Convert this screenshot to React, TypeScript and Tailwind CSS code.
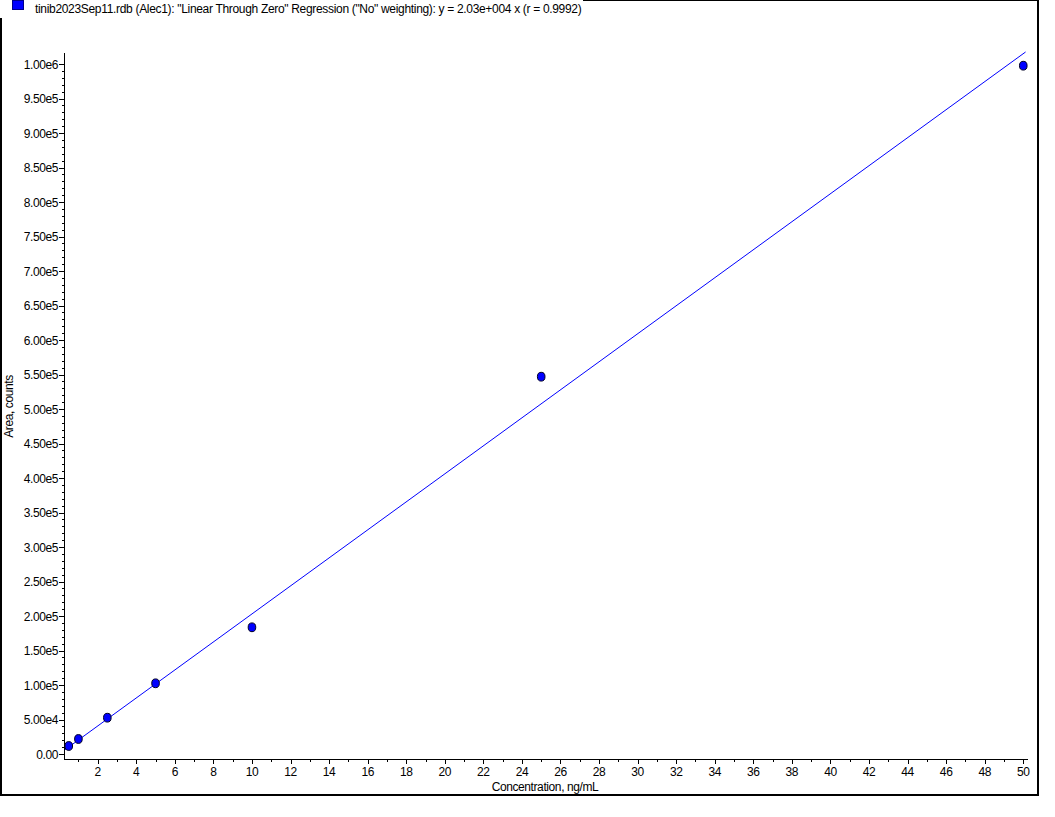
import React from 'react';

// chart scale, in page pixels
const X0 = 59.13;
const XS = 19.283;
const Y0 = 754;
const YS = 0.00069;
const SLOPE = 2.03e4;

const px = (c: number) => X0 + c * XS;
const py = (v: number) => Y0 - v * YS;

const POINTS = [
  { c: 0.5, v: 11594 },
  { c: 1, v: 21739 },
  { c: 2.5, v: 52609 },
  { c: 5, v: 102464 },
  { c: 10, v: 183623 },
  { c: 25, v: 546812 },
  { c: 50, v: 997536 },
];

const AXIS_X = 64;
const AXIS_Y = 759;

function fmt(v: number) {
  if (v === 0) return '0.00';
  return v.toExponential(2).replace('e+', 'e');
}

function Chart() {
  const yMajor = Array.from({ length: 21 }, (_, i) => i * 5e4);
  const yMinor = Array.from({ length: 101 }, (_, i) => i * 1e4).filter((v) => v % 5e4 !== 0);
  const xTicks = Array.from({ length: 50 }, (_, i) => i + 1);

  return (
    <svg
      width={1035}
      height={793}
      viewBox="2 1 1035 793"
      className="block font-['Liberation_Sans',Arial,sans-serif] text-[12px] tracking-[-0.4px]"
    >
      {/* axes */}
      <line x1={AXIS_X + 0.5} y1={53} x2={AXIS_X + 0.5} y2={AXIS_Y + 0.5} stroke="#000" strokeWidth={1} />
      <line x1={AXIS_X} y1={AXIS_Y + 0.5} x2={1028} y2={AXIS_Y + 0.5} stroke="#000" strokeWidth={1} />

      {yMajor.map((v) => (
        <g key={v}>
          <line x1={59} y1={Math.round(py(v)) + 0.5} x2={AXIS_X} y2={Math.round(py(v)) + 0.5} stroke="#000" />
          <text x={58} y={py(v) + 4.5} textAnchor="end" fill="#000">
            {fmt(v)}
          </text>
        </g>
      ))}
      {yMinor.map((v) => (
        <line key={v} x1={62} y1={Math.round(py(v)) + 0.5} x2={AXIS_X} y2={Math.round(py(v)) + 0.5} stroke="#000" />
      ))}

      {xTicks.map((c) => {
        const x = Math.round(px(c)) + 0.5;
        const major = c % 2 === 0;
        return (
          <g key={c}>
            <line x1={x} y1={AXIS_Y + 1} x2={x} y2={AXIS_Y + (major ? 5 : 3)} stroke="#000" />
            {major && (
              <text x={px(c)} y={776} textAnchor="middle" fill="#000">
                {c}
              </text>
            )}
          </g>
        );
      })}

      {/* regression line */}
      <line x1={px(0.3)} y1={py(SLOPE * 0.3)} x2={px(50.12)} y2={py(SLOPE * 50.12)} stroke="#0000ff" strokeWidth={1} />

      {POINTS.map((p) => (
        <ellipse key={p.c} cx={px(p.c)} cy={py(p.v)} rx={3.8} ry={4.4} fill="#0000ff" stroke="#000022" strokeWidth={1} />
      ))}

      <text x={545} y={791} textAnchor="middle" fill="#000">
        Concentration, ng/mL
      </text>
      <text x={12.5} y={406.5} textAnchor="middle" fill="#000" transform="rotate(-90 12.5 406.5)">
        Area, counts
      </text>
    </svg>
  );
}

export default function App() {
  return (
    <div className="relative w-[1055px] h-[817px] bg-white">
      <div className="w-[1039px] h-[796px] border-t border-x-2 border-b-2 border-black">
        <Chart />
      </div>
      <div className="absolute left-0 top-0 flex items-start bg-white pr-[2px] font-['Liberation_Sans',Arial,sans-serif] text-[12px] leading-[18px] tracking-[-0.32px] text-black">
        <div className="ml-[12px] w-[12px] h-[10px] bg-[#0000ff] border border-[#00008a]" />
        <span className="ml-[11px] whitespace-nowrap">
          tinib2023Sep11.rdb (Alec1): "Linear Through Zero" Regression ("No" weighting): y = 2.03e+004 x (r = 0.9992)
        </span>
      </div>
    </div>
  );
}
